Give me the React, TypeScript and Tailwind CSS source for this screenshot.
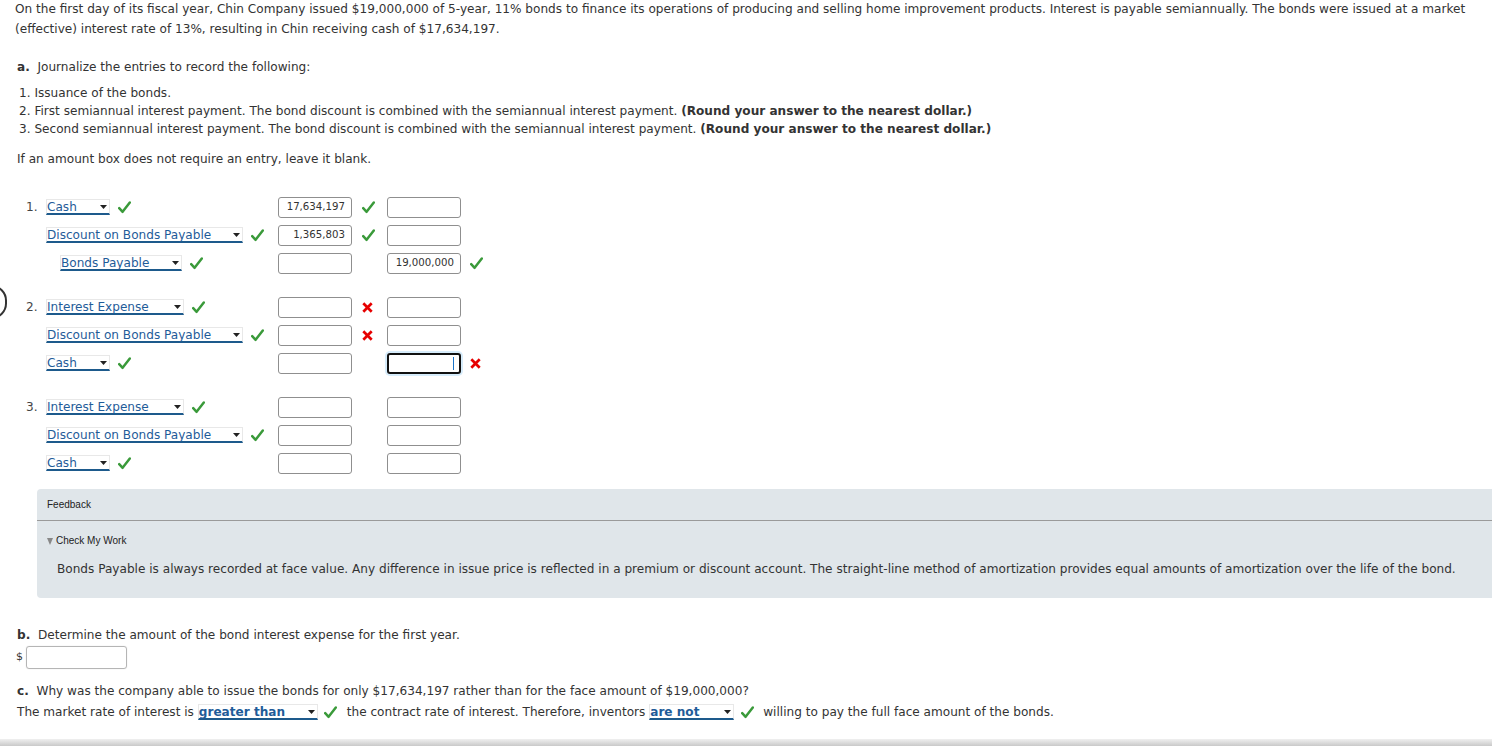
import React from "react";

const FONT = { fontFamily: '"DejaVu Sans", Verdana, sans-serif' };

function Check() {
  return (
    <svg width="13" height="13" viewBox="0 0 13 13" className="block">
      <path d="M1.2 7.2 L4.6 10.8 L11.8 1.6" fill="none" stroke="#3a9a3a" strokeWidth="2.5" strokeLinecap="round" strokeLinejoin="round" />
    </svg>
  );
}

function Cross() {
  return (
    <svg width="11" height="11" viewBox="0 0 11 11" className="block">
      <path d="M1.3 1.3 L9.7 9.7 M9.7 1.3 L1.3 9.7" fill="none" stroke="#e60000" strokeWidth="2.7" />
    </svg>
  );
}

function Select({ label, w, bold = false }: { label: string; w: number; bold?: boolean }) {
  return (
    <span
      className={`inline-flex items-center justify-between h-[16px] border border-[#e8e8e8] border-b-2 border-b-[#1d5a8c] pl-0 pr-[2px] text-[#1f5c99] leading-[14px] ${bold ? "font-bold" : ""}`}
      style={{ width: w }}
    >
      <span className="whitespace-nowrap">{label}</span>
      <svg width="7" height="4" viewBox="0 0 7 4" className="block">
        <path d="M0 0 L7 0 L3.5 4 Z" fill="#222" />
      </svg>
    </span>
  );
}

function Amount({ value, focused = false }: { value?: string; focused?: boolean }) {
  if (focused) {
    return (
      <div className="w-[74px] h-[21px] rounded-[3px] border-2 border-[#111] shadow-[0_0_0_2px_#d6ecfb] flex items-center justify-end pr-[5px] box-border">
        <span className="block w-[1px] h-[13px] bg-[#1a73c9]" />
      </div>
    );
  }
  return (
    <div
      className="w-[74px] h-[21px] rounded-[3px] border border-[#8f8f8f] flex items-center justify-end pr-[6px] text-[10.2px] text-[#333] box-border"
      style={FONT}
    >
      {value}
    </div>
  );
}

type Mark = "check" | "cross" | null;

function Row({
  num,
  label,
  selW,
  indent = 0,
  selMark = "check",
  debit,
  debitMark = null,
  credit,
  creditMark = null,
  creditFocused = false,
}: {
  num?: string;
  label: string;
  selW: number;
  indent?: number;
  selMark?: Mark;
  debit?: string;
  debitMark?: Mark;
  credit?: string;
  creditMark?: Mark;
  creditFocused?: boolean;
}) {
  return (
    <div className="flex items-center h-[28px] pl-[26px]">
      <div className="w-[20px] text-[#444]">{num}</div>
      <div className="w-[232px] flex items-center" style={{ paddingLeft: indent }}>
        <Select label={label} w={selW} />
        <span className="ml-[8px]">{selMark === "check" ? <Check /> : null}</span>
      </div>
      <Amount value={debit} />
      <div className="w-[35px] pl-[10px]">
        {debitMark === "check" ? <Check /> : debitMark === "cross" ? <Cross /> : null}
      </div>
      <Amount value={credit} focused={creditFocused} />
      <div className="pl-[9px]">
        {creditMark === "check" ? <Check /> : creditMark === "cross" ? <Cross /> : null}
      </div>
    </div>
  );
}

export default function App() {
  return (
    <div className="relative w-full h-[751px] overflow-hidden bg-white text-[12.1px] text-[#333]" style={FONT}>
      <div className="absolute left-[-24px] top-[285px] w-[31px] h-[34px] rounded-full border-2 border-[#333]" />

      <div className="pl-[15px] leading-[20px] mt-[-1px]">
        <div className="whitespace-nowrap">
          On the first day of its fiscal year, Chin Company issued $19,000,000 of 5-year, 11% bonds to finance its operations of producing and selling home improvement products. Interest is payable semiannually. The bonds were issued at a market
        </div>
        <div className="whitespace-nowrap">(effective) interest rate of 13%, resulting in Chin receiving cash of $17,634,197.</div>
      </div>

      <div className="pl-[17px] mt-[19px] leading-[18px]">
        <span className="font-bold">a.</span>&nbsp; Journalize the entries to record the following:
      </div>
      <div className="pl-[19px] mt-[8px] leading-[18px]">
        <div>1. Issuance of the bonds.</div>
        <div>
          2. First semiannual interest payment. The bond discount is combined with the semiannual interest payment.{" "}
          <span className="font-bold">(Round your answer to the nearest dollar.)</span>
        </div>
        <div>
          3. Second semiannual interest payment. The bond discount is combined with the semiannual interest payment.{" "}
          <span className="font-bold">(Round your answer to the nearest dollar.)</span>
        </div>
      </div>
      <div className="pl-[17px] mt-[12px] leading-[18px]">If an amount box does not require an entry, leave it blank.</div>

      <div className="mt-[25px]">
        <Row num="1." label="Cash" selW={64} debit="17,634,197" debitMark="check" />
        <Row label="Discount on Bonds Payable" selW={197} debit="1,365,803" debitMark="check" />
        <Row label="Bonds Payable" selW={122} indent={14} credit="19,000,000" creditMark="check" />
      </div>
      <div className="mt-[16px]">
        <Row num="2." label="Interest Expense" selW={138} debitMark="cross" />
        <Row label="Discount on Bonds Payable" selW={197} debitMark="cross" />
        <Row label="Cash" selW={64} creditFocused creditMark="cross" />
      </div>
      <div className="mt-[16px]">
        <Row num="3." label="Interest Expense" selW={138} />
        <Row label="Discount on Bonds Payable" selW={197} />
        <Row label="Cash" selW={64} />
      </div>

      <div className="ml-[37px] mt-[12px] h-[109px] bg-[#e0e6ea] rounded-l-[4px]">
        <div className="h-[32px] border-b-[1.5px] border-[#9a9a9a] pl-[10px] pt-[9px] text-[10px] leading-[14px] text-[#222]" style={{ fontFamily: '"Liberation Sans", Arial, sans-serif' }}>
          Feedback
        </div>
        <div className="pl-[10px] pt-[13px] text-[10px] leading-[14px] text-[#222] flex items-center" style={{ fontFamily: '"Liberation Sans", Arial, sans-serif' }}>
          <svg width="6" height="7" viewBox="0 0 6 7" className="block mr-[3px]">
            <path d="M0 0 L6 0 L3 7 Z" fill="#888" />
          </svg>
          Check My Work
        </div>
        <div className="pl-[20px] mt-[12px] leading-[18px] whitespace-nowrap">
          Bonds Payable is always recorded at face value. Any difference in issue price is reflected in a premium or discount account. The straight-line method of amortization provides equal amounts of amortization over the life of the bond.
        </div>
      </div>

      <div className="pl-[17px] mt-[28px] leading-[18px]">
        <span className="font-bold">b.</span>&nbsp; Determine the amount of the bond interest expense for the first year.
      </div>
      <div className="flex items-center pl-[16px] mt-[2px]">
        <span className="w-[10px] text-[11px]">$</span>
        <div className="w-[101px] h-[23px] rounded-[3px] border border-[#b5b5b5] shadow-[0_0_1px_#ccc]" />
      </div>

      <div className="pl-[17px] mt-[13px] leading-[18px]">
        <span className="font-bold">c.</span>&nbsp; Why was the company able to issue the bonds for only $17,634,197 rather than for the face amount of $19,000,000?
      </div>
      <div className="pl-[17px] mt-[3px] leading-[18px] flex items-center whitespace-nowrap">
        <span>The market rate of interest is&nbsp;</span>
        <Select label="greater than" w={120} bold />
        <span className="ml-[6px]"><Check /></span>
        <span className="ml-[10px]">the contract rate of interest. Therefore, inventors&nbsp;</span>
        <Select label="are not" w={85} bold />
        <span className="ml-[7px]"><Check /></span>
        <span className="ml-[9px]">willing to pay the full face amount of the bonds.</span>
      </div>

      <div className="mt-[18px] h-[7px] bg-gradient-to-b from-[#f0f0f0] to-[#c9c9c9]" />
    </div>
  );
}
